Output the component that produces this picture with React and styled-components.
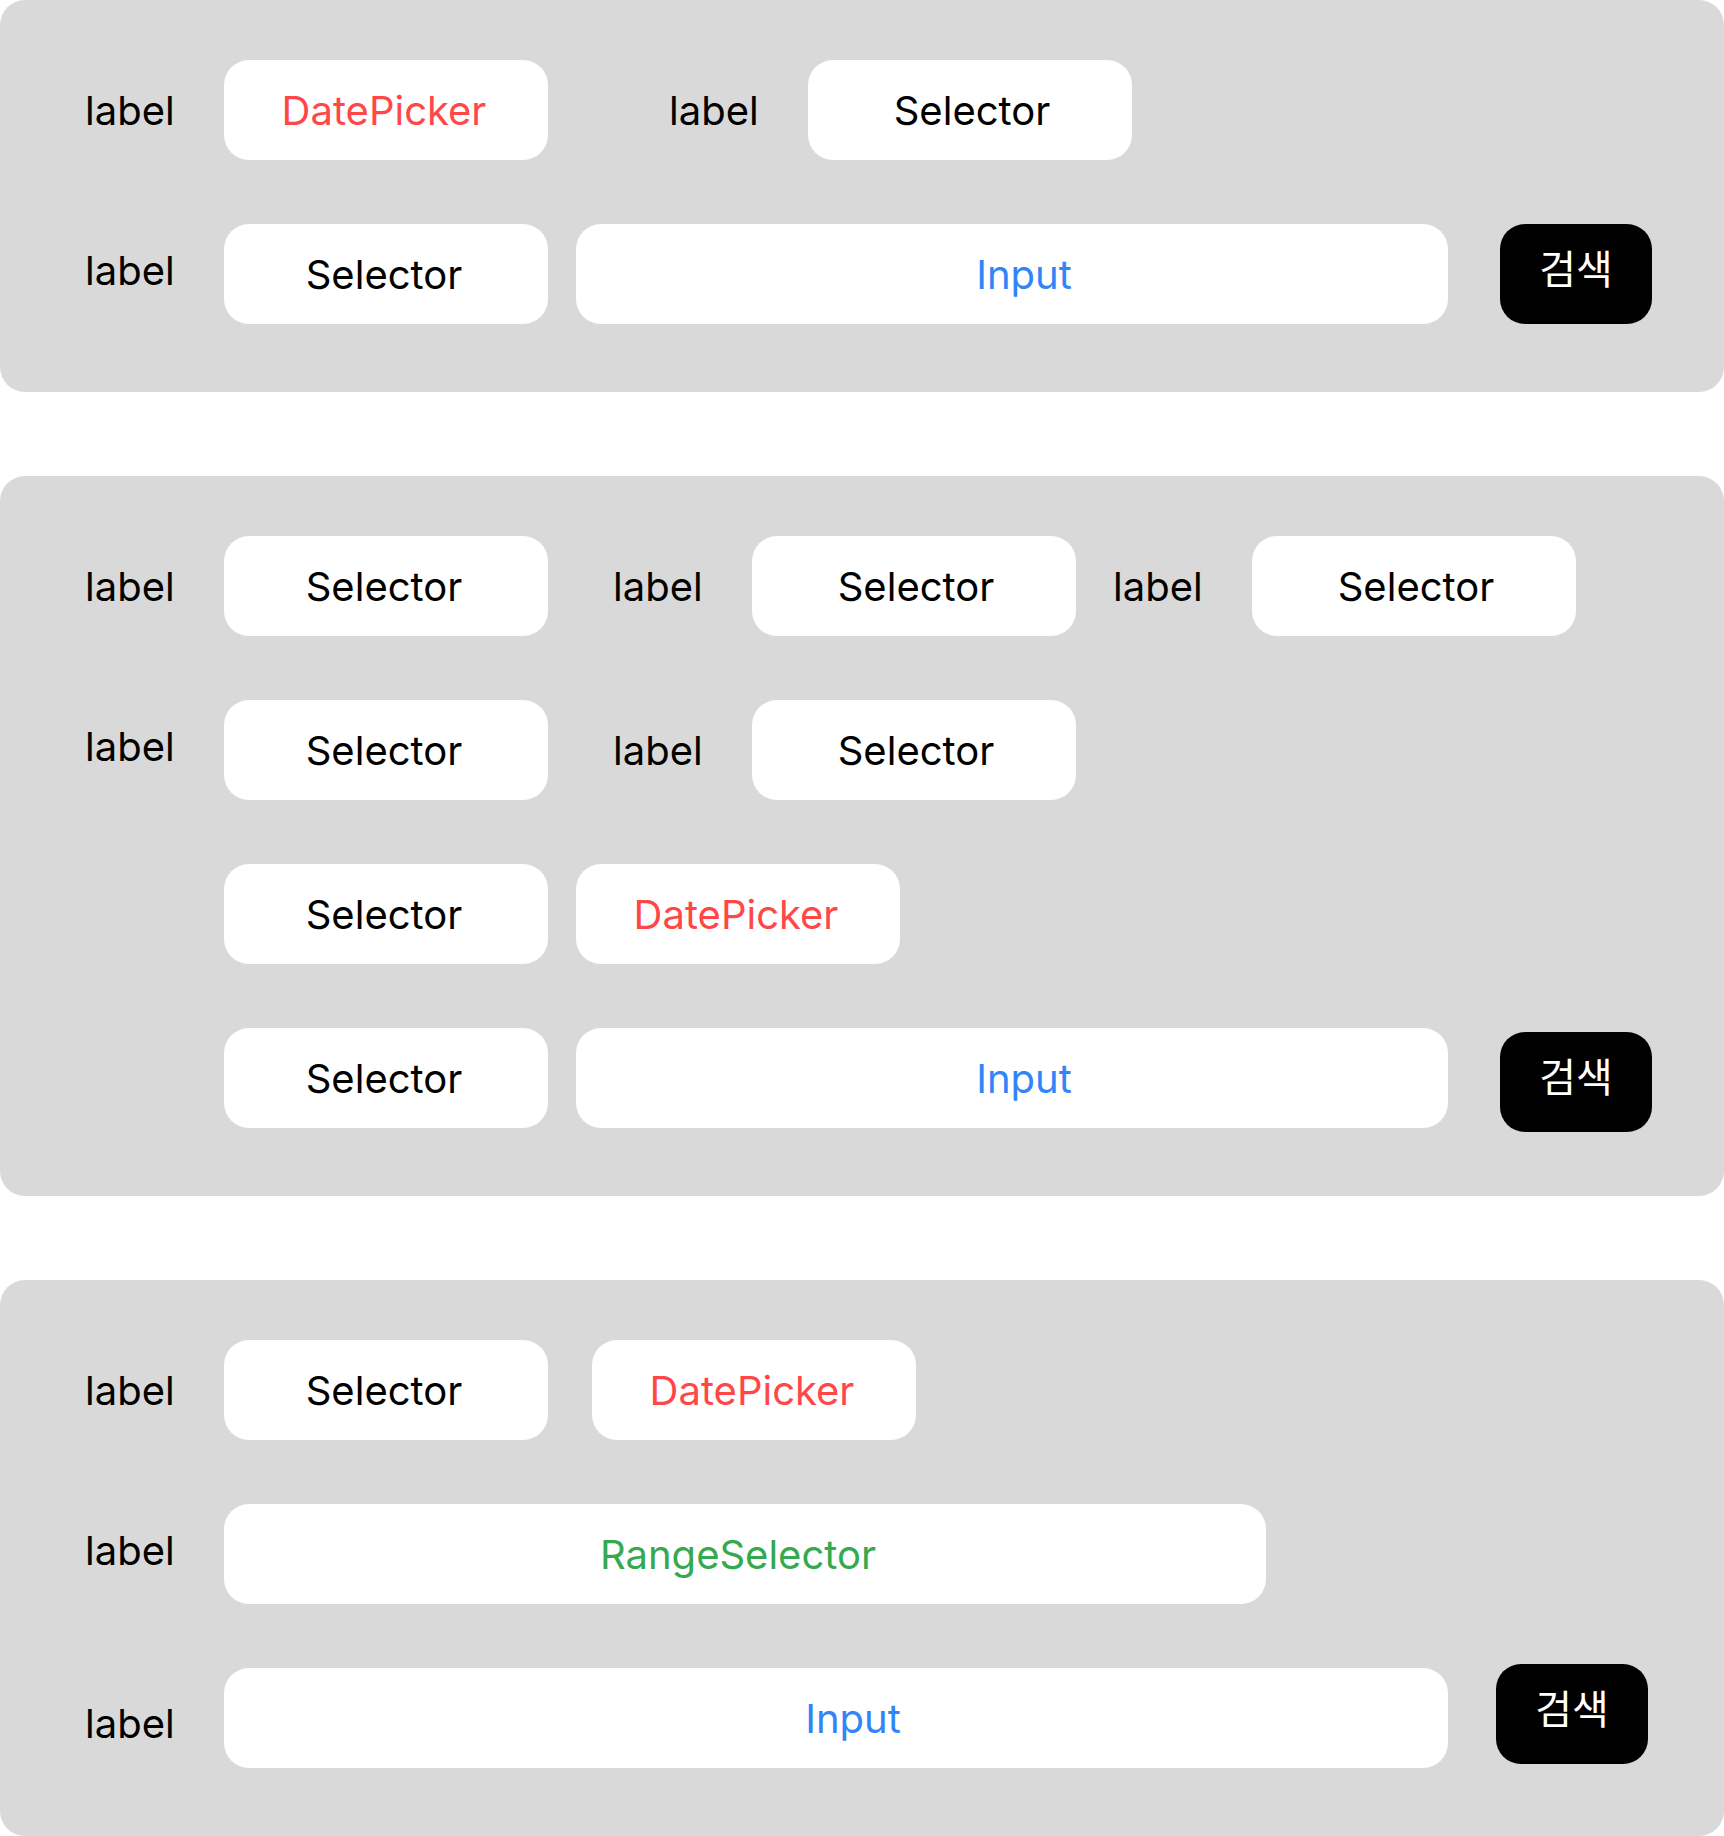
import React from 'react';
import styled, {createGlobalStyle} from 'styled-components';

const GlobalStyle = createGlobalStyle`
  html, body {
    margin: 0;
    padding: 0;
    background: #ffffff;
  }
  body {
    font-family: Inter, "Noto Sans", "Noto Sans CJK KR", sans-serif;
  }
`;

const TONES = {
  plain: '#000000',
  date: '#FF4747',
  input: '#3185F7',
  range: '#35A94F',
};

const Page = styled.div`
  display: flex;
  flex-direction: column;
  gap: 84px;
  width: 1724px;
`;

const Panel = styled.section`
  display: flex;
  flex-direction: column;
  gap: 64px;
  padding: 60px 0 68px 85px;
  background: #d9d9d9;
  border-radius: 25px;
`;

const Row = styled.div`
  display: flex;
  align-items: center;
  height: 100px;
`;

// $nudge moves the text up (negative) or down (positive) off the row centre
const Label = styled.span`
  flex-shrink: 0;
  width: 139px;
  margin-left: ${p => p.$ml || 0}px;
  margin-top: ${p => (p.$nudge > 0 ? p.$nudge * 2 : 0)}px;
  margin-bottom: ${p => (p.$nudge < 0 ? -p.$nudge * 2 : 0)}px;
  font-size: 40px;
  color: #000000;
`;

// $shift moves the centred text right (positive) or left (negative)
const Field = styled.div`
  flex-shrink: 0;
  display: flex;
  align-items: center;
  justify-content: center;
  box-sizing: border-box;
  width: ${p => p.$w || 324}px;
  height: 100px;
  margin-left: ${p => p.$ml || 0}px;
  padding-left: ${p => Math.max(0, (p.$shift ?? -2) * 2)}px;
  padding-right: ${p => Math.max(0, -(p.$shift ?? -2) * 2)}px;
  background: #ffffff;
  border-radius: 25px;
  font-size: 40px;
  color: ${p => TONES[p.$tone || 'plain']};
`;

const SearchButton = styled.button`
  flex-shrink: 0;
  display: flex;
  align-items: center;
  justify-content: center;
  box-sizing: border-box;
  width: 152px;
  height: 100px;
  margin-left: ${p => p.$ml || 52}px;
  margin-top: ${p => (p.$nudge > 0 ? p.$nudge * 2 : 0)}px;
  margin-bottom: ${p => (p.$nudge < 0 ? -p.$nudge * 2 : 0)}px;
  padding: 0 0 14px;
  border: 0;
  border-radius: 25px;
  background: #000000;
  color: #ffffff;
  font-family: "Noto Sans CJK KR", sans-serif;
  font-size: 40px;
  cursor: pointer;
`;

function App() {
  return (
    <Page>
      <GlobalStyle />

      <Panel>
        <Row>
          <Label>label</Label>
          <Field $tone="date">DatePicker</Field>
          <Label $ml={121}>label</Label>
          <Field $shift={2}>Selector</Field>
        </Row>
        <Row>
          <Label $nudge={-4}>label</Label>
          <Field>Selector</Field>
          <Field $ml={28} $w={872} $shift={12} $tone="input">Input</Field>
          <SearchButton>검색</SearchButton>
        </Row>
      </Panel>

      <Panel>
        <Row>
          <Label>label</Label>
          <Field>Selector</Field>
          <Label $ml={65}>label</Label>
          <Field $shift={2}>Selector</Field>
          <Label $ml={37}>label</Label>
          <Field $shift={2}>Selector</Field>
        </Row>
        <Row>
          <Label $nudge={-4}>label</Label>
          <Field>Selector</Field>
          <Label $ml={65}>label</Label>
          <Field $shift={2}>Selector</Field>
        </Row>
        <Row>
          <Label />
          <Field>Selector</Field>
          <Field $ml={28} $tone="date">DatePicker</Field>
        </Row>
        <Row>
          <Label />
          <Field>Selector</Field>
          <Field $ml={28} $w={872} $shift={12} $tone="input">Input</Field>
          <SearchButton $nudge={4}>검색</SearchButton>
        </Row>
      </Panel>

      <Panel>
        <Row>
          <Label>label</Label>
          <Field>Selector</Field>
          <Field $ml={44} $tone="date">DatePicker</Field>
        </Row>
        <Row>
          <Label $nudge={-4}>label</Label>
          <Field $w={1042} $shift={-7} $tone="range">RangeSelector</Field>
        </Row>
        <Row>
          <Label $nudge={5}>label</Label>
          <Field $w={1224} $shift={17} $tone="input">Input</Field>
          <SearchButton $ml={48} $nudge={-4}>검색</SearchButton>
        </Row>
      </Panel>
    </Page>
  );
}

export default App;
